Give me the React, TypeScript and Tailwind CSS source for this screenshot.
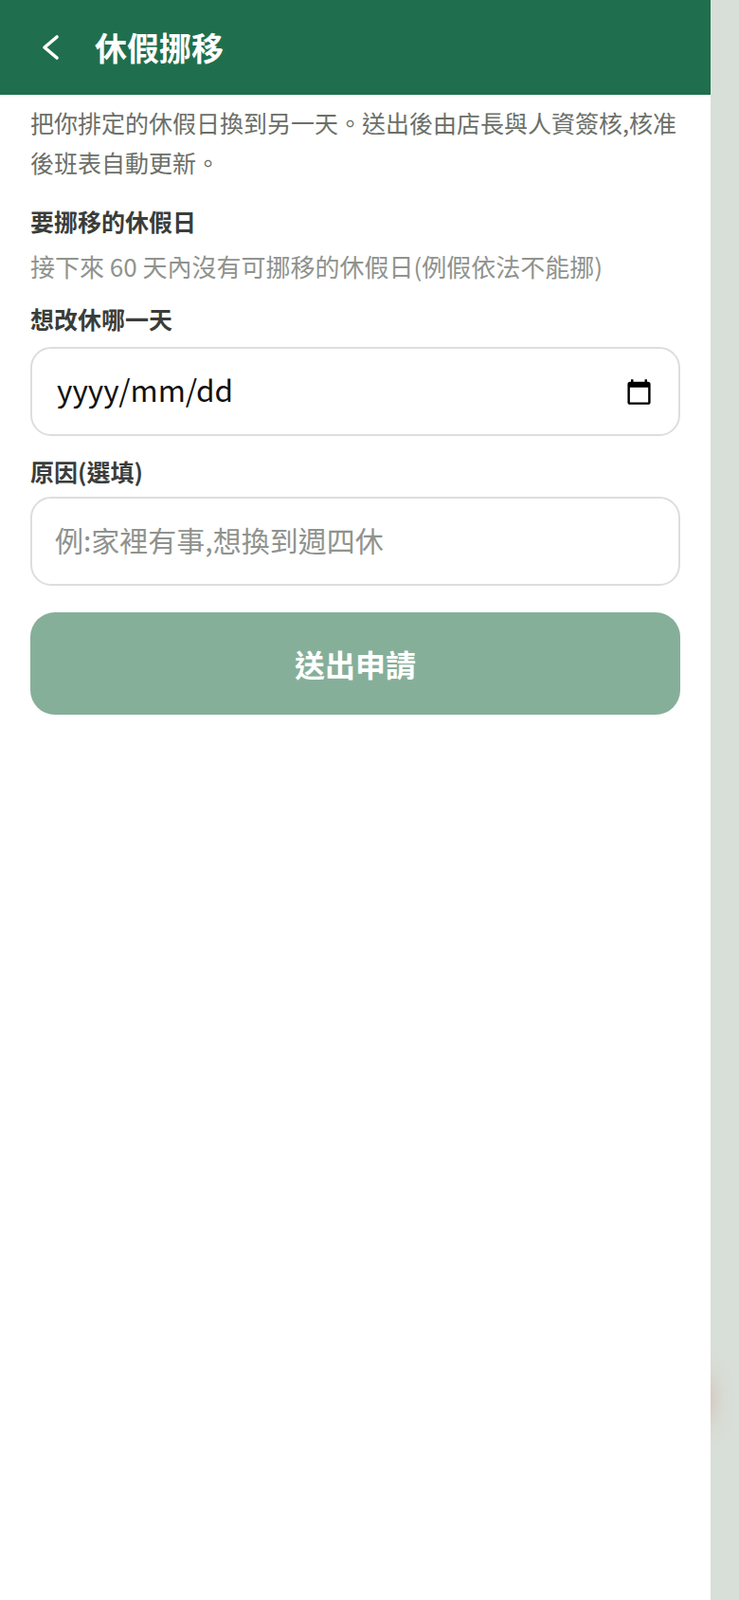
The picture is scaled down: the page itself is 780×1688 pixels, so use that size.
export default function App() {
  return (
    <div className="relative flex min-h-[1688px] overflow-hidden bg-[#d8dfd8] font-['Noto_Sans_CJK_TC','Noto_Sans_CJK_JP',sans-serif]">
      <main className="relative z-10 h-[1688px] w-[750px] bg-white">
        <header className="flex h-[100px] items-center bg-[#1f6f4e] pl-[41px] text-white">
          <svg className="h-[32px] w-[24px]" viewBox="0 0 24 32" fill="none" stroke="currentColor" strokeWidth="3.6" strokeLinecap="round" strokeLinejoin="round">
            <path d="M19 5L6 16l13 11" />
          </svg>
          <h1 className="ml-[35px] text-[34px] font-bold leading-none">休假挪移</h1>
        </header>

        <div className="px-[32px]">
          <p className="mt-[8px] text-[25px] leading-[42px] text-[#6b6f68]">
            把你排定的休假日換到另一天。送出後由店長與人資簽核,核准後班表自動更新。
          </p>

          <h2 className="mt-[23px] text-[25px] font-bold leading-[36px] text-[#3a3d3a]">要挪移的休假日</h2>
          <p className="mt-[8px] text-[26px] leading-[44px] text-[#8f938e]">
            接下來 60 天內沒有可挪移的休假日(例假依法不能挪)
          </p>

          <label className="mt-[15px] block text-[25px] font-bold leading-[36px] text-[#3a3d3a]">想改休哪一天</label>
          <div className="mt-[12px] flex h-[94px] items-center justify-between rounded-[22px] border-2 border-[#dbdfdc] bg-white pl-[26px] pr-[27px] text-[31.5px] text-[#111]">
            <span className="-translate-y-[2px]">yyyy/mm/dd</span>
            <svg className="h-[29px] w-[29px]" viewBox="0 0 24 24" fill="#000">
              <path d="M20 3h-1V1h-2v2H7V1H5v2H4c-1.1 0-2 .9-2 2v16c0 1.1.9 2 2 2h16c1.1 0 2-.9 2-2V5c0-1.1-.9-2-2-2zm0 18H4V8h16v13z" />
            </svg>
          </div>

          <label className="mt-[19px] block text-[25px] font-bold leading-[36px] text-[#3a3d3a]">原因(選填)</label>
          <input
            type="text"
            placeholder="例:家裡有事,想換到週四休"
            className="mt-[9px] block h-[94px] w-full rounded-[22px] border-2 border-[#dbdfdc] bg-white px-[24px] pb-[4px] text-[30px] text-[#111] outline-none placeholder:text-[#8f938e]"
          />

          <button className="mt-[28px] h-[108px] w-full rounded-[26px] bg-[#86af9a] text-[32px] font-bold text-white">
            送出申請
          </button>
        </div>
      </main>

      {/* floating button peeking out behind the panel, only its shadow shows */}
      <div className="absolute left-[678px] top-[1440px] h-[68px] w-[68px] rounded-full bg-[#d8dfd8] shadow-[0_2px_26px_rgba(210,90,70,0.5)]" />
    </div>
  );
}
